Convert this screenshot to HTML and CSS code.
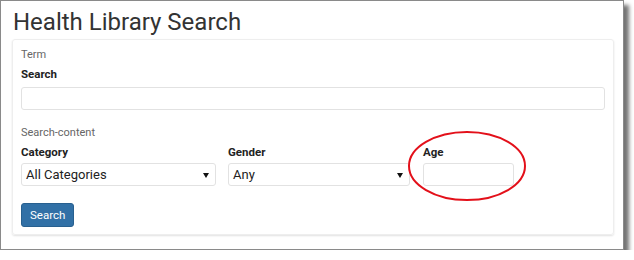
FILE: index.html
```html
<!DOCTYPE html>
<html lang="en">
<head>
    <meta charset="UTF-8">
    <title>Health Library Search</title>
    <link rel="stylesheet" href="styles.css">
</head>
<body>
    <div class="shot">
        <h1>Health Library Search</h1>

        <div class="panel">
            <div class="group-title">Term</div>
            <label class="field-label" for="term">Search</label>
            <input type="text" id="term" class="text-input">

            <div class="group-title second">Search-content</div>
            <div class="filters">
                <div class="col">
                    <label class="field-label">Category</label>
                    <div class="select-box">All Categories</div>
                </div>
                <div class="col">
                    <label class="field-label">Gender</label>
                    <div class="select-box">Any</div>
                </div>
                <div class="col">
                    <label class="field-label">Age</label>
                    <input type="text" class="text-input age">
                </div>
            </div>

            <button type="button" class="btn">Search</button>
        </div>

        <!-- red callout round the age field -->
        <svg class="callout" width="124" height="74" viewBox="0 0 124 74">
            <ellipse cx="62" cy="37" rx="58" ry="34"
                     fill="none" stroke="#e3101a" stroke-width="2"/>
        </svg>
    </div>
</body>
</html>
```

FILE: styles.css
```css
body {
    margin: 0;
    background-color: #fff;
    font-family: Roboto, "Liberation Sans", Arial, sans-serif;
    color: #333;
}
.shot {
    position: relative;
    width: 622px;
    height: 248px;
    border: 1px solid #8a8a8a;
    box-shadow: 5px 5px 4px rgba(0, 0, 0, 0.55);
    background-color: #fff;
}
h1 {
    margin: 0;
    padding: 6px 0 0 12px;
    height: 32px;
    font-size: 24px;
    font-weight: 400;
    line-height: 30px;
    color: #333;
}
.panel {
    margin: 0 0 0 11px;
    width: 584px;
    height: 177px;
    padding: 7px 8px 10px 8px;
    border: 1px solid #eee;
    border-radius: 3px;
    box-shadow: 0 1px 2px rgba(0, 0, 0, 0.12);
}
.group-title {
    font-size: 11px;
    line-height: 16px;
    color: #666;
}
.group-title.second {
    margin-top: 15px;
}
.field-label {
    display: block;
    margin-top: 3px;
    font-size: 11.5px;
    font-weight: 700;
    line-height: 16px;
    color: #222;
}
.text-input {
    display: block;
    box-sizing: border-box;
    width: 100%;
    height: 23px;
    margin-top: 5px;
    border: 1px solid #e2e2e2;
    border-radius: 3px;
    background-color: #fff;
}
.filters {
    display: grid;
    grid-template-columns: 195px 182px 92px;
    column-gap: 12px;
}
.filters .col:nth-child(3) {
    margin-left: 1px;
}
.select-box {
    position: relative;
    box-sizing: border-box;
    height: 23px;
    margin-top: 3px;
    padding: 0 0 0 4px;
    border: 1px solid #e2e2e2;
    border-radius: 3px;
    font-size: 13px;
    line-height: 21px;
    color: #222;
}
.select-box::after {
    content: "";
    position: absolute;
    right: 6px;
    top: 9px;
    border-left: 3px solid transparent;
    border-right: 3px solid transparent;
    border-top: 5px solid #111;
}
.col .age {
    margin-top: 3px;
}
.btn {
    display: block;
    margin-top: 17px;
    height: 24px;
    padding: 0 8px;
    border: 1px solid #28608f;
    border-radius: 3px;
    background-color: #3170a6;
    color: #fff;
    font-family: Roboto, "Liberation Sans", Arial, sans-serif;
    font-size: 11.5px;
}
.callout {
    position: absolute;
    left: 404px;
    top: 128px;
}
```
